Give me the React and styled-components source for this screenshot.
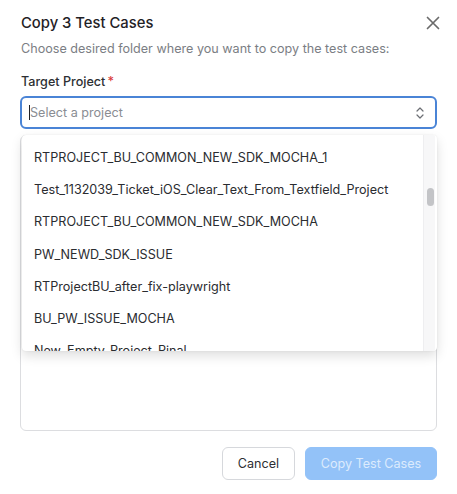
import React from "react";
import styled, { createGlobalStyle } from "styled-components";

const Global = createGlobalStyle`
  html, body { margin: 0; padding: 0; background: #ffffff; }
  body { font-family: Inter, "Noto Sans", sans-serif; -webkit-font-smoothing: antialiased; }
  * { box-sizing: border-box; }
`;

const Dialog = styled.div`
  width: 457px;
  height: 494px;
  padding: 11px 20px 14px 20px;
  display: flex;
  flex-direction: column;
  background: #fff;
`;

const Header = styled.div`
  display: flex;
  align-items: center;
  justify-content: space-between;
  height: 24px;
`;

const Title = styled.h2`
  margin: 0 0 0 1px;
  font-size: 14.8px;
  font-weight: 500;
  color: #1f2125;
`;

const CloseButton = styled.button`
  border: 0;
  background: none;
  padding: 0;
  width: 18px;
  height: 18px;
  display: flex;
  align-items: center;
  justify-content: center;
  margin-right: -5px;
  color: #6b6b6b;
`;

const Subtitle = styled.p`
  margin: 6px 0 0 1px;
  font-size: 12.6px;
  line-height: 16px;
  color: #7b7e84;
`;

const Label = styled.div`
  margin: 17px 0 0 1px;
  font-size: 12.6px;
  line-height: 16px;
  font-weight: 500;
  color: #2d2f33;
`;

const Required = styled.span`
  color: #d93a3a;
  margin-left: 2px;
`;

const SelectBox = styled.div`
  margin-top: 6px;
  height: 33px;
  border: 2px solid #4a84d6;
  border-radius: 6px;
  display: flex;
  align-items: center;
  padding: 0 10px 0 7px;
  font-size: 12.6px;
  color: #8a8d93;
`;

const Caret = styled.span`
  width: 1px;
  height: 15px;
  background: #1f2125;
`;

const Placeholder = styled.span`
  flex: 1;
`;

const FieldArea = styled.div`
  position: relative;
  margin-top: 6px;
  height: 296px;
  border: 1px solid #dcdde0;
  border-radius: 6px;
`;

const Dropdown = styled.div`
  position: absolute;
  left: 1px;
  top: -1px;
  right: -1px;
  height: 216px;
  background: #fff;
  border-radius: 4px;
  box-shadow: 0 5px 12px rgba(0, 0, 0, 0.13), 0 0 2px rgba(0, 0, 0, 0.08);
  overflow: hidden;
`;

const List = styled.ul`
  list-style: none;
  margin: 0;
  padding: 6px 0 0 0;
`;

const Item = styled.li`
  height: 32.3px;
  display: flex;
  align-items: center;
  padding-left: 12px;
  font-size: 12.6px;
  color: #2a2c30;
  white-space: nowrap;
`;

const Track = styled.div`
  position: absolute;
  top: 0;
  right: 2px;
  width: 12px;
  bottom: 0;
  background: #f7f7f8;
  border-left: 1px solid #eeeef0;
`;

const Thumb = styled.div`
  position: absolute;
  left: 3px;
  width: 7px;
  top: 53px;
  height: 18px;
  border-radius: 4px;
  background: #c3c4c7;
`;

const Footer = styled.div`
  margin-top: 16px;
  display: flex;
  justify-content: flex-end;
  gap: 10px;
`;

const Button = styled.button`
  height: 33px;
  border-radius: 6px;
  font-family: Inter, "Noto Sans", sans-serif;
  font-size: 12.6px;
  padding: 0;
  white-space: nowrap;
  border: 1px solid ${(p) => (p.$primary ? "#93c2f8" : "#d6d8dc")};
  background: ${(p) => (p.$primary ? "#93c2f8" : "#ffffff")};
  color: ${(p) => (p.$primary ? "#dcebfd" : "#2d2f33")};
  width: ${(p) => p.$w}px;
`;

const projects = [
  "RTPROJECT_BU_COMMON_NEW_SDK_MOCHA_1",
  "Test_1132039_Ticket_iOS_Clear_Text_From_Textfield_Project",
  "RTPROJECT_BU_COMMON_NEW_SDK_MOCHA",
  "PW_NEWD_SDK_ISSUE",
  "RTProjectBU_after_fix-playwright",
  "BU_PW_ISSUE_MOCHA",
  "New_Empty_Project_Pinal",
];

export default function App() {
  return (
    <>
      <Global />
      <Dialog>
        <Header>
          <Title>Copy 3 Test Cases</Title>
          <CloseButton aria-label="Close">
            <svg width="14" height="14" viewBox="0 0 14 14" fill="none" stroke="currentColor" strokeWidth="1.7" strokeLinecap="round">
              <path d="M1.5 1.5 L12.5 12.5 M12.5 1.5 L1.5 12.5" />
            </svg>
          </CloseButton>
        </Header>
        <Subtitle>Choose desired folder where you want to copy the test cases:</Subtitle>
        <Label>
          Target Project<Required>*</Required>
        </Label>
        <SelectBox>
          <Caret />
          <Placeholder>Select a project</Placeholder>
          <svg width="10" height="14" viewBox="0 0 10 14" fill="none" stroke="#6b6e73" strokeWidth="1.2" strokeLinecap="round" strokeLinejoin="round">
            <path d="M2 5 L5 2 L8 5" />
            <path d="M2 9 L5 12 L8 9" />
          </svg>
        </SelectBox>
        <FieldArea>
          <Dropdown>
            <List>
              {projects.map((p) => (
                <Item key={p}>{p}</Item>
              ))}
            </List>
            <Track>
              <Thumb />
            </Track>
          </Dropdown>
        </FieldArea>
        <Footer>
          <Button $w={73}>Cancel</Button>
          <Button $primary $w={132}>Copy Test Cases</Button>
        </Footer>
      </Dialog>
    </>
  );
}
